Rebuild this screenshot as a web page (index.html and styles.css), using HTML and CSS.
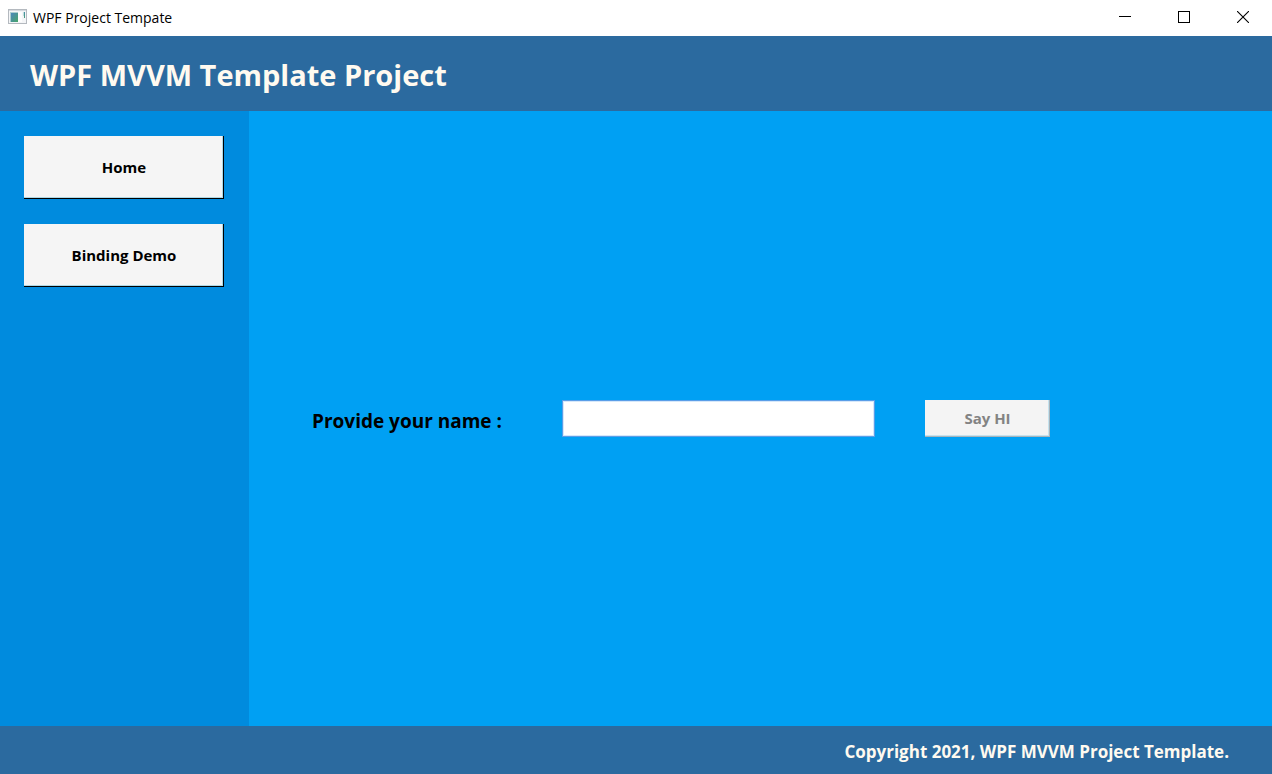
FILE: index.html
```html
<!DOCTYPE html>
<html lang="en">
<head>
<meta charset="utf-8">
<title>WPF Project Tempate</title>
<link rel="stylesheet" href="styles.css">
</head>
<body>
<div class="titlebar">
  <svg class="app-icon" width="19" height="16" viewBox="0 0 19 16" aria-hidden="true">
    <defs><linearGradient id="pane" x1="0" y1="0" x2="1" y2="1"><stop offset="0" stop-color="#4a86bd"/><stop offset="1" stop-color="#48a568"/></linearGradient></defs>
    <rect x=".5" y=".5" width="18" height="14" fill="#f4f5f7" stroke="#b4b9bf"/>
    <rect x="1" y="1" width="17" height="1" fill="#d5d9de"/>
    <rect x="2" y="3" width="8" height="10" fill="#a9cdd0"/>
    <rect x="3" y="4" width="7" height="9" fill="url(#pane)"/>
    <rect x="10" y="3" width="4" height="10" fill="#fdfdfd"/>
    <rect x="15" y="3" width="1" height="4" fill="#c3dfdc"/>
    <rect x="16" y="3" width="1" height="6" fill="url(#pane)"/>
  </svg>
  <span class="caption">WPF Project Tempate</span>
  <div class="window-controls">
    <button class="window-button" type="button" aria-label="Minimize"><svg width="12" height="12" shape-rendering="crispEdges"><path d="M0 5.5H12" stroke="#000"/></svg></button>
    <button class="window-button" type="button" aria-label="Maximize"><svg width="12" height="12" shape-rendering="crispEdges"><path d="M.5 .5H11.5V11.5H.5Z" fill="none" stroke="#000"/></svg></button>
    <button class="window-button" type="button" aria-label="Close"><svg width="12" height="12"><path d="M0 0L12 12M12 0L0 12" stroke="#000" stroke-width="1.1"/></svg></button>
  </div>
</div>
<header class="header"><h1 class="heading">WPF MVVM Template Project</h1></header>
<div class="body">
  <nav class="sidebar">
    <button class="nav-button" type="button">Home</button>
    <button class="nav-button" type="button">Binding Demo</button>
  </nav>
  <main class="content">
    <form class="name-form">
      <label class="name-label" for="name">Provide your name :</label>
      <input class="name-input" id="name" type="text">
      <button class="say-button" type="button" disabled>Say HI</button>
    </form>
  </main>
</div>
<footer class="footer">Copyright 2021, WPF MVVM Project Template.</footer>
</body>
</html>
```
FILE: styles.css
```css
* {
  box-sizing: border-box;
}

body {
  margin: 0;
  min-height: 100vh;
  display: flex;
  flex-direction: column;
  font-family: "Open Sans", "Noto Sans", sans-serif;
  color: #000;
}

button,
input {
  font: inherit;
}

.titlebar {
  display: flex;
  align-items: center;
  height: 36px;
  padding-left: 8px;
  gap: 6px;
  background: #fff;
}

.app-icon {
  margin-bottom: 2px;
}

.caption {
  font-size: 14px;
  line-height: 20px;
}

.window-controls {
  display: flex;
  align-self: stretch;
  margin-left: auto;
}

.window-button {
  display: grid;
  place-items: center;
  width: 59px;
  padding: 0 0 2px;
  border: 0;
  background: none;
}

.header {
  display: flex;
  align-items: center;
  height: 75px;
  padding: 2px 30px 0;
  background: #2b6a9f;
  color: #fffaf0;
}

.heading {
  margin: 0;
  font-size: 29px;
  line-height: 40px;
  font-weight: 700;
}

.body {
  flex: 1;
  display: grid;
  grid-template-columns: 249px 1fr;
}

.sidebar {
  display: flex;
  flex-direction: column;
  gap: 25px;
  padding: 25px 25px 25px 24px;
  background: #008bde;
}

.nav-button,
.say-button {
  padding: 0 0 2px;
  border: 0;
  background: #f5f5f5;
  font-weight: 700;
  font-size: 15px;
}

.nav-button {
  height: 63px;
  color: #000;
  box-shadow: inset -1px -1px #000, inset -2px -2px #add8e6;
}

.content {
  display: grid;
  align-items: center;
  padding: 0 222px 0 63px;
  background: #00a0f3;
}

.name-form {
  display: grid;
  grid-template-columns: 200fr 312fr 125px;
  column-gap: 50px;
  align-items: center;
}

.name-label {
  font-size: 19px;
  line-height: 26px;
  font-weight: 700;
  padding-top: 4px;
  white-space: nowrap;
}

.name-input {
  width: 100%;
  height: 37px;
  padding: 0 8px;
  border: 1px solid #5a9ee8;
  background: #fff;
  box-shadow: inset 0 0 0 1px #d6e8fa;
  font-size: 18px;
}

.say-button {
  height: 37px;
  background: #f4f4f4;
  color: #838383;
  box-shadow: inset -1px -1px #a9b4bb, inset -2px -2px #c5e2ee;
}

.footer {
  display: flex;
  align-items: center;
  justify-content: flex-end;
  height: 48px;
  padding: 3px 43px 0 30px;
  background: #2b6a9f;
  color: #fffaf0;
  font-size: 17px;
  line-height: 24px;
  font-weight: 700;
}
```
